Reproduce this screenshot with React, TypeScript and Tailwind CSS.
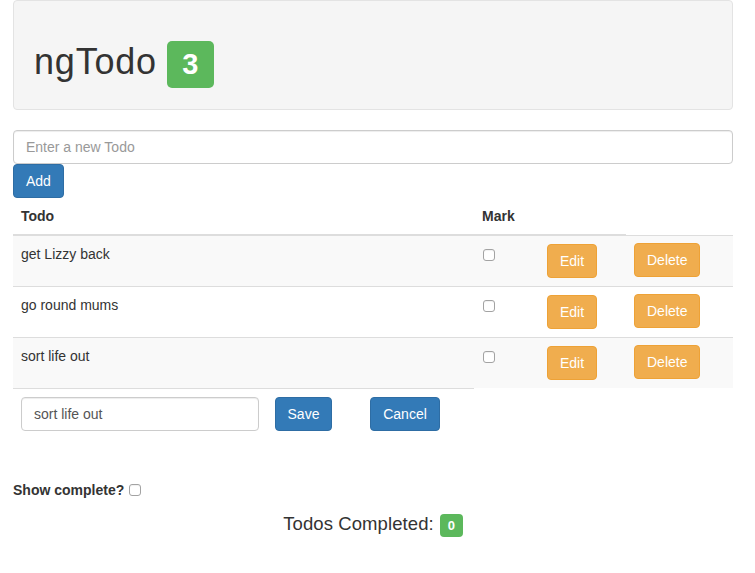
const todos = ['get Lizzy back', 'go round mums', 'sort life out'];

function Checkbox() {
  return (
    <input
      type="checkbox"
      className="block appearance-none w-[12px] h-[12px] m-0 bg-white border border-[#a3a3a3] rounded-[3px] shadow-[inset_0_1px_1px_rgba(0,0,0,0.06)]"
    />
  );
}

export default function App() {
  return (
    <div className="min-h-screen bg-white text-[14px] leading-[20px] text-[#333] font-['Liberation_Sans',Arial,sans-serif]">
      <div className="pl-[13px] w-[733px]">
        <div className="h-[110px] pl-[20px] pt-[40px] flex items-start rounded-[4px] border border-[#e3e3e3] bg-[#f5f5f5]">
          <h1 className="flex items-start text-[36px] leading-[40px] font-normal">
            <span className="pt-px tracking-[0.8px]">ngTodo</span>
            <span className="ml-[10px] w-[47px] h-[47px] rounded-[5px] bg-[#5cb85c] text-center text-[29px] leading-[47px] font-bold text-white">
              3
            </span>
          </h1>
        </div>

        <input
          type="text"
          placeholder="Enter a new Todo"
          className="block mt-[20px] w-[720px] h-[34px] px-[12px] rounded-[4px] border border-[#ccc] bg-white text-[14px] text-[#555] placeholder:text-[#999] shadow-[inset_0_1px_1px_rgba(0,0,0,0.075)] outline-none"
        />
        <button className="block h-[34px] px-[12px] rounded-[4px] border border-[#2e6da4] bg-[#337ab7] text-white">
          Add
        </button>

        <table className="table-fixed w-[720px]">
          <colgroup>
            <col className="w-[461px]" />
            <col className="w-[65px]" />
            <col className="w-[87px]" />
            <col className="w-[107px]" />
          </colgroup>
          <thead>
            <tr>
              <th className="p-[8px] text-left font-bold border-b-2 border-[#ddd]">Todo</th>
              <th className="p-[8px] text-left font-bold border-b-2 border-[#ddd]">Mark</th>
              <th className="p-[8px] border-b-2 border-[#ddd]"></th>
            </tr>
          </thead>
          <tbody>
            {todos.map((todo, i) => (
              <tr key={todo} className={i % 2 === 0 ? 'bg-[#f9f9f9]' : 'bg-white'}>
                <td className="p-[8px] align-top border-t border-[#ddd]">{todo}</td>
                <td className="p-[8px] align-top border-t border-[#ddd]">
                  <div className="pt-[5px] pl-px">
                    <Checkbox />
                  </div>
                </td>
                <td className="p-[8px] align-top border-t border-[#ddd]">
                  <button className="block h-[34px] px-[12px] rounded-[4px] border border-[#eea236] bg-[#f0ad4e] text-white">
                    Edit
                  </button>
                </td>
                <td className="p-[8px] align-top border-t border-[#ddd]">
                  <button className="block -mt-px h-[34px] px-[12px] rounded-[4px] border border-[#eea236] bg-[#f0ad4e] text-white">
                    Delete
                  </button>
                </td>
              </tr>
            ))}
            <tr>
              <td className="p-[8px] align-top border-t border-[#ddd]">
                <div className="flex items-start">
                  <input
                    type="text"
                    defaultValue="sort life out"
                    className="block w-[238px] h-[34px] px-[12px] rounded-[4px] border border-[#ccc] bg-white text-[14px] text-[#555] shadow-[inset_0_1px_1px_rgba(0,0,0,0.075)] outline-none"
                  />
                  <button className="ml-[16px] w-[57px] h-[34px] rounded-[4px] border border-[#2e6da4] bg-[#337ab7] text-white">
                    Save
                  </button>
                  <button className="ml-[38px] w-[70px] h-[34px] rounded-[4px] border border-[#2e6da4] bg-[#337ab7] text-white">
                    Cancel
                  </button>
                </div>
              </td>
            </tr>
          </tbody>
        </table>

        <label className="mt-[41px] flex items-center font-bold">
          Show complete?
          <span className="ml-[5px]">
            <Checkbox />
          </span>
        </label>

        <div className="mt-[14px] w-[720px] flex justify-center items-center">
          <h4 className="mb-[2px] text-[18.5px] font-normal tracking-[0.1px]">Todos Completed:</h4>
          <span className="ml-[6px] w-[23px] h-[23px] rounded-[4px] bg-[#5cb85c] text-center text-[13px] leading-[23px] font-bold text-white">
            0
          </span>
        </div>
      </div>
    </div>
  );
}
